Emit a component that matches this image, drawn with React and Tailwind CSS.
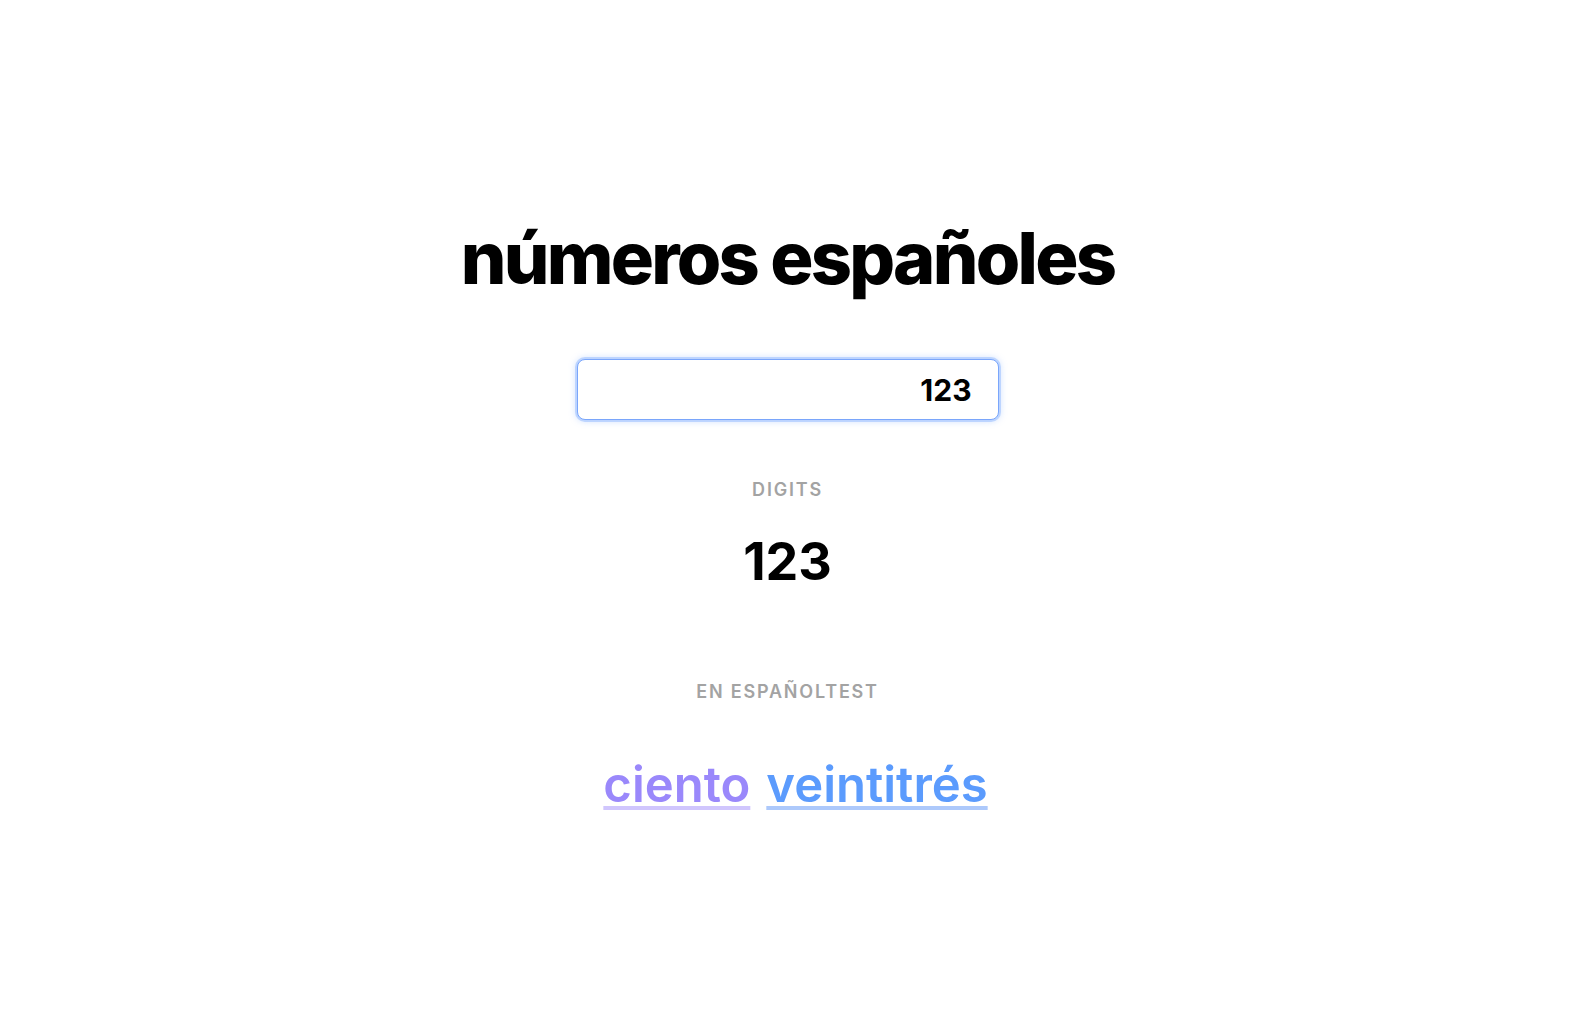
export default function App() {
  const words = [
    { text: 'ciento', color: 'text-[#9a88fb] decoration-[#d0c6fd]' },
    { text: 'veintitrés', color: 'text-[#5b9bfd] decoration-[#adc9fb]' },
  ]

  return (
    <div className="min-h-screen bg-white flex flex-col items-center pr-[7px] text-black font-['Inter','Liberation_Sans',sans-serif]">
      {/* Title */}
      <h1 className="mt-[222px] text-[72px] leading-none font-extrabold tracking-[-0.038em]">
        números españoles
      </h1>

      {/* Number input */}
      <input
        type="text"
        defaultValue="123"
        autoFocus
        className="mt-[65px] w-[422px] h-[61px] rounded-lg border border-[#7aa6fb] bg-white pl-[22px] pr-[26px] text-right text-[30px] font-bold outline-none shadow-[0_0_0_2px_rgba(138,180,255,0.45),0_0_6px_2px_rgba(138,180,255,0.35)] caret-black"
      />

      {/* Digits */}
      <div className="mt-[61px] text-lg leading-none font-semibold tracking-widest text-[#a3a3a3] uppercase">
        Digits
      </div>
      <div className="mt-[37px] text-[52px] leading-none font-bold">123</div>

      {/* Spanish words */}
      <div className="mt-[95px] text-lg leading-none font-semibold tracking-widest text-[#a3a3a3] uppercase">
        en españoltest
      </div>
      <div className="mt-[59px] flex gap-[16px] pl-[16px] text-[49px] leading-none font-semibold">
        {words.map((w) => (
          <span
            key={w.text}
            className={`${w.color} underline decoration-[4px] underline-offset-[4px]`}
          >
            {w.text}
          </span>
        ))}
      </div>
    </div>
  )
}
